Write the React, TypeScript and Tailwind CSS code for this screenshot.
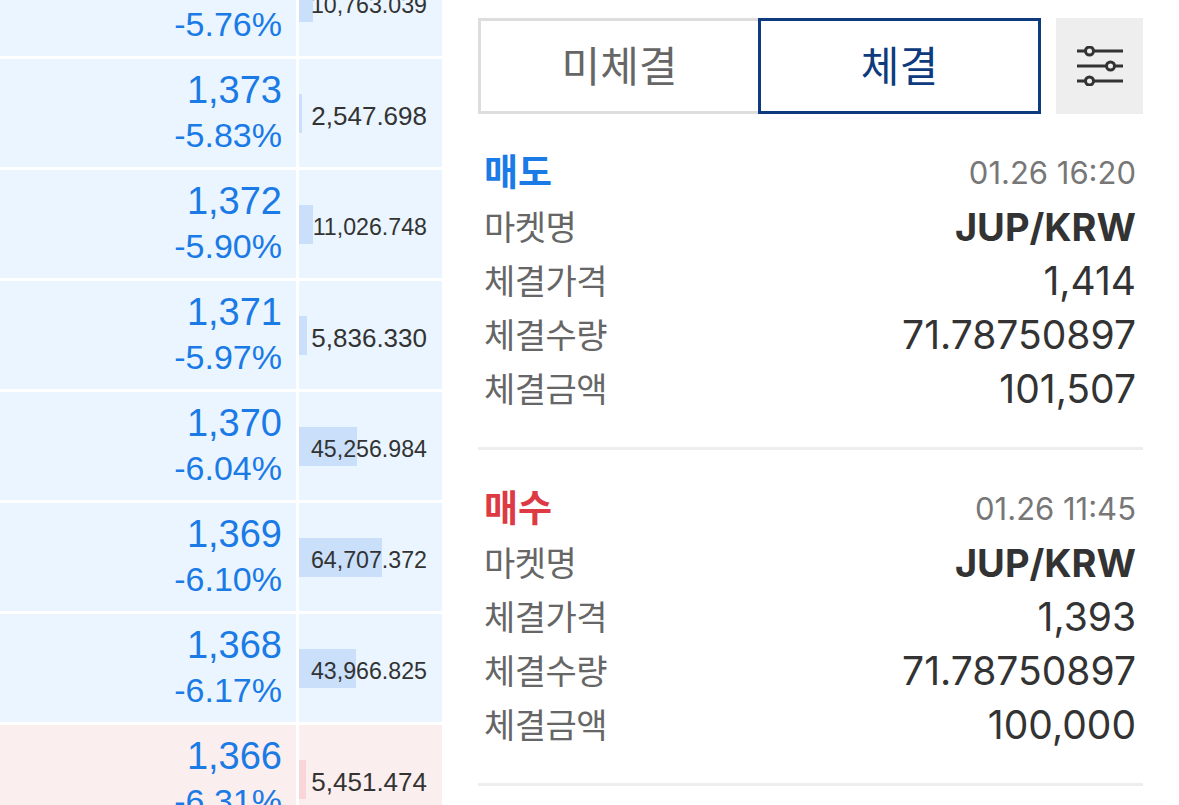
import React from 'react';

type Level = {
  price: string;
  rate: string;
  volume: string;
  bar: number;
  tone: 'blue' | 'red';
};

const levels: Level[] = [
  { price: '1,374', rate: '-5.76%', volume: '10,763.039', bar: 14, tone: 'blue' },
  { price: '1,373', rate: '-5.83%', volume: '2,547.698', bar: 3, tone: 'blue' },
  { price: '1,372', rate: '-5.90%', volume: '11,026.748', bar: 14, tone: 'blue' },
  { price: '1,371', rate: '-5.97%', volume: '5,836.330', bar: 8, tone: 'blue' },
  { price: '1,370', rate: '-6.04%', volume: '45,256.984', bar: 58, tone: 'blue' },
  { price: '1,369', rate: '-6.10%', volume: '64,707.372', bar: 83, tone: 'blue' },
  { price: '1,368', rate: '-6.17%', volume: '43,966.825', bar: 57, tone: 'blue' },
  { price: '1,366', rate: '-6.31%', volume: '5,451.474', bar: 7, tone: 'red' },
];

const fills = [
  { side: '매도', sideClass: 'text-[#1a7ae6]', time: '01.26 16:20', price: '1,414', qty: '71.78750897', total: '101,507' },
  { side: '매수', sideClass: 'text-[#dd3a44]', time: '01.26 11:45', price: '1,393', qty: '71.78750897', total: '100,000' },
];

const OrderRow = ({ level }: { level: Level }) => {
  const bg = level.tone === 'blue' ? 'bg-[#eaf5ff]' : 'bg-[#fbeeee]';
  // the long quantities are set smaller so they fill the same width
  const volumeSize = level.volume.length > 9 ? 'text-[23.2px] mt-[7px]' : 'text-[26px] mt-[6px]';
  return (
    <div className="flex h-[108px] gap-[3px]">
      <div className={`w-[296px] ${bg} flex flex-col items-end justify-center pr-[14px]`}>
        <div className="text-[38px] leading-[44px] text-[#1a7ae6] mt-[-2px]">{level.price}</div>
        <div className="text-[34px] leading-[44px] text-[#1a7ae6] mt-[1px]">{level.rate}</div>
      </div>
      <div className={`w-[143px] ${bg} relative flex items-center justify-end pr-[15px]`}>
        <div
          className={`absolute left-0 top-[35px] h-[39px] ${level.tone === 'blue' ? 'bg-[#c9dffa]' : 'bg-[#f8d6d8]'}`}
          style={{ width: level.bar }}
        />
        <span className={`relative ${volumeSize} leading-none text-[#333333]`}>{level.volume}</span>
      </div>
    </div>
  );
};

const FillRow = ({ label, value, bold }: { label: string; value: string; bold?: boolean }) => (
  <div className="flex h-[54px] items-center justify-between">
    <span className="text-[34px] text-[#666666] tracking-[-0.5px]">{label}</span>
    <span className={`text-[#333333] ${bold ? 'text-[38px] font-bold' : 'text-[39px]'}`}>{value}</span>
  </div>
);

export default function App() {
  return (
    <div
      className="flex h-[805px] w-[1179px] overflow-hidden bg-white"
      style={{ fontFamily: '"Liberation Sans", "Noto Sans CJK KR", sans-serif' }}
    >
      <div className="w-[442px] shrink-0">
        <div className="mt-[-52px] flex flex-col gap-[3px]">
          {levels.map((level) => (
            <OrderRow key={level.price} level={level} />
          ))}
        </div>
      </div>

      <div
        className="ml-[36px] w-[665px] pt-[18px]"
        style={{ fontFamily: 'Inter, "Noto Sans CJK KR", sans-serif' }}
      >
        <div className="flex h-[96px]">
          <button className="w-[280px] border-[3px] border-r-0 border-[#dddddd] text-[42px] text-[#666666]">미체결</button>
          <button className="w-[283px] border-[3px] border-[#0e3a7e] text-[42px] text-[#0e3a7e]">체결</button>
          <button className="ml-[15px] flex w-[87px] items-center justify-center bg-[#eeeeee]">
            <svg width="46" height="40" viewBox="0 0 46 40" fill="none" stroke="#333333" strokeWidth="3">
              <path d="M0 5h8.5M16.500 5h29.500M0 20h29.500M37.500 20h8.500M0 35h8.500M16.500 35h29.500" />
              <circle cx="12.500" cy="5" r="4" />
              <circle cx="33.500" cy="20" r="4" />
              <circle cx="12.500" cy="35" r="4" />
            </svg>
          </button>
        </div>

        {fills.map((fill) => (
          <div key={fill.time} className="h-[336px] border-b-[3px] border-[#eeeeee] pl-[6px] pr-[7px] pt-[32px]">
            <div className="flex h-[54px] items-center justify-between">
              <span className={`text-[37px] font-bold ${fill.sideClass}`}>{fill.side}</span>
              <span className="text-[31px] text-[#777777]">{fill.time}</span>
            </div>
            <FillRow label="마켓명" value="JUP/KRW" bold />
            <FillRow label="체결가격" value={fill.price} />
            <FillRow label="체결수량" value={fill.qty} />
            <FillRow label="체결금액" value={fill.total} />
          </div>
        ))}
      </div>
    </div>
  );
}
